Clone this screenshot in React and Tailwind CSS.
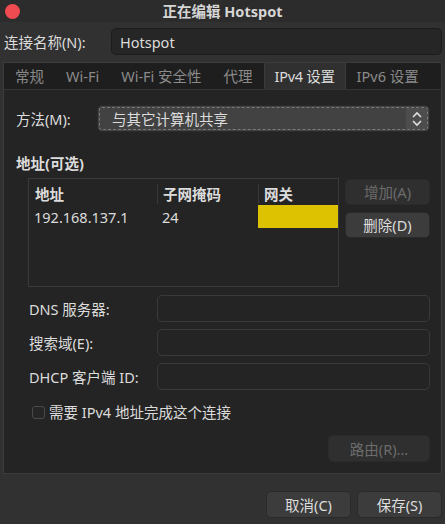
import React from "react";

const font = { fontFamily: '"Noto Sans", "Noto Sans CJK SC", sans-serif' };

const Field = ({ label }) => (
  <div className="flex flex-row items-center h-[27px]">
    <label className="w-[129px] pl-[1px] text-[#dcdcdc]">{label}</label>
    <div className="flex-1 h-[27px] rounded-[5px] border border-[#3a3a3a] bg-[#242424]"></div>
  </div>
);

const App = () => {
  const tabs = ["常规", "Wi-Fi", "Wi-Fi 安全性", "代理", "IPv4 设置", "IPv6 设置"];
  return (
    <div
      className="w-[445px] h-[524px] bg-[#313131] flex flex-col text-[14.5px] leading-[20px] text-[#dcdcdc] overflow-hidden"
      style={font}
    >
      {/* title bar */}
      <div className="h-[22px] flex flex-row items-center bg-[#2c2c2c]">
        <div className="w-[60px] pl-[5px] flex items-center">
          <div className="w-[15px] h-[15px] rounded-full bg-[#ef4b51]"></div>
        </div>
        <div className="flex-1 text-center font-bold text-[#d6d6d6]">正在编辑 Hotspot</div>
        <div className="w-[60px]"></div>
      </div>

      {/* connection name */}
      <div className="mt-[6px] flex flex-row items-center h-[27px] pl-[4px] pr-[3px]">
        <label className="w-[107px]">连接名称(N):</label>
        <div className="flex-1 h-[27px] rounded-[5px] border border-[#1c1c1c] bg-[#262626] flex items-center pl-[8px]">
          Hotspot
        </div>
      </div>

      {/* notebook */}
      <div className="mt-[7px] mx-[3px] h-[412px] border border-[#3c3c3c] bg-[#242424] flex flex-col">
        <div className="h-[27px] flex flex-row bg-[#1e1e1e] border-b border-[#353535]">
          {tabs.map((t) => (
            <div
              key={t}
              className={
                t === "IPv4 设置"
                  ? "w-[82px] whitespace-nowrap tracking-[-0.3px] flex items-center justify-center bg-[#303030] text-[#dcdcdc] border-x border-[#3a3a3a]"
                  : "px-[11px] whitespace-nowrap flex items-center text-[#8a8a8a]"
              }
            >
              {t}
            </div>
          ))}
        </div>

        <div className="flex flex-col pl-[12px] pr-[11px] pt-[15px]">
          {/* method */}
          <div className="flex flex-row items-center h-[27px]">
            <label className="w-[81px]">方法(M):</label>
            <div className="flex-1 h-[27px] rounded-[5px] bg-[#424242] border border-[#2a2a2a] p-[1px]">
              <div className="h-full flex flex-row border border-dashed border-[#7a7a7a] rounded-[3px]">
                <div className="flex-1 flex items-center pl-[12px]">与其它计算机共享</div>
                <div className="w-[21px] bg-[#4d4d4d] flex items-center justify-center">
                  <svg width="12" height="16" viewBox="0 0 12 16" fill="none" stroke="#e0e0e0" strokeWidth="1.6">
                    <path d="M2 6 L6 2 L10 6" />
                    <path d="M2 10 L6 14 L10 10" />
                  </svg>
                </div>
              </div>
            </div>
          </div>

          <div className="mt-[21px] font-bold">地址(可选)</div>

          {/* address table */}
          <div className="mt-[5px] pl-[12px] flex flex-row">
            <div className="w-[311px] h-[109px] border border-[#3a3a3a] bg-[#242424]">
              <div className="grid grid-cols-[128px_101px_80px] h-[26px] font-bold">
                <div className="pl-[6px] flex items-center">地址</div>
                <div className="pl-[5px] flex items-center border-l border-[#3a3a3a] my-[5px]">子网掩码</div>
                <div className="pl-[5px] flex items-center border-l border-[#3a3a3a] my-[5px]">网关</div>
              </div>
              <div className="grid grid-cols-[128px_101px_80px] h-[23px]">
                <div className="pl-[5px] flex items-center">192.168.137.1</div>
                <div className="pl-[5px] flex items-center">24</div>
                <div className="bg-[#dcc200]"></div>
              </div>
            </div>
            <div className="ml-[6px] flex-1 flex flex-col gap-[7px] pt-[1px]">
              <button className="h-[26px] rounded-[5px] bg-[#2f2f2f] border border-[#2a2a2a] text-[#6c6c6c]">
                增加(A)
              </button>
              <button className="h-[26px] rounded-[5px] bg-[#3c3c3c] border border-[#2a2a2a] text-[#dcdcdc]">
                删除(D)
              </button>
            </div>
          </div>

          {/* fields */}
          <div className="mt-[8px] pl-[12px] flex flex-col gap-[7px]">
            <Field label="DNS 服务器:" />
            <Field label="搜索域(E):" />
            <Field label="DHCP 客户端 ID:" />
          </div>

          <div className="mt-[14px] pl-[16px] flex flex-row items-center h-[16px]">
            <div className="w-[13px] h-[13px] rounded-[3px] border border-[#4a4a4a] bg-[#262626]"></div>
            <span className="ml-[4px]">需要 IPv4 地址完成这个连接</span>
          </div>

          <div className="mt-[15px] flex flex-row justify-end">
            <button className="w-[102px] h-[27px] rounded-[5px] bg-[#2f2f2f] border border-[#2a2a2a] text-[#6c6c6c]">
              路由(R)...
            </button>
          </div>
        </div>
      </div>

      {/* dialog buttons */}
      <div className="mt-[17px] pr-[3px] flex flex-row justify-end gap-[6px]">
        <button className="w-[85px] h-[27px] rounded-[5px] bg-[#3c3c3c] border border-[#2a2a2a] text-[#dcdcdc]">
          取消(C)
        </button>
        <button className="w-[85px] h-[27px] rounded-[5px] bg-[#3c3c3c] border border-[#2a2a2a] text-[#dcdcdc]">
          保存(S)
        </button>
      </div>
    </div>
  );
};

export default App;
